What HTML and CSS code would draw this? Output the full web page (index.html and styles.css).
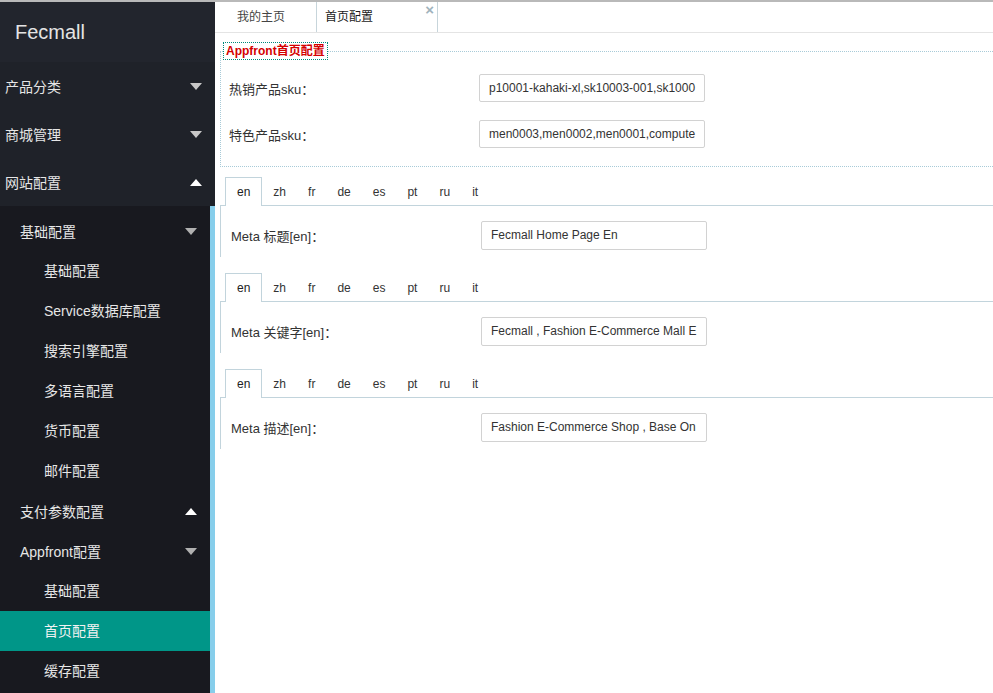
FILE: index.html
```html
<!DOCTYPE html>
<html lang="zh">
<head>
<meta charset="utf-8">
<title>Fecmall</title>
<link rel="stylesheet" href="styles.css">
</head>
<body>
<div class="page">
  <aside class="sidebar">
    <div class="logo">Fecmall</div>
    <ul class="nav">
      <li class="nav-item"><span>产品分类</span><i class="arrow down"></i></li>
      <li class="nav-item"><span>商城管理</span><i class="arrow down"></i></li>
      <li class="nav-item"><span>网站配置</span><i class="arrow up"></i></li>
    </ul>
    <div class="subwrap">
      <ul class="subnav">
        <li class="sub-head"><span>基础配置</span><i class="arrow down dim"></i></li>
        <li class="sub-item">基础配置</li>
        <li class="sub-item">Service数据库配置</li>
        <li class="sub-item">搜索引擎配置</li>
        <li class="sub-item">多语言配置</li>
        <li class="sub-item">货币配置</li>
        <li class="sub-item">邮件配置</li>
        <li class="sub-head"><span>支付参数配置</span><i class="arrow up"></i></li>
        <li class="sub-head"><span>Appfront配置</span><i class="arrow down dim"></i></li>
        <li class="sub-item">基础配置</li>
        <li class="sub-item active">首页配置</li>
        <li class="sub-item">缓存配置</li>
      </ul>
      <div class="scroll-track"></div>
    </div>
  </aside>
  <main class="main">
    <div class="tabbar">
      <div class="tab home">我的主页</div>
      <div class="tab current">首页配置<span class="close">×</span></div>
    </div>
    <div class="content">
      <fieldset class="box">
        <legend class="box-title">Appfront首页配置</legend>
        <div class="row">
          <label class="row-label">热销产品sku：</label>
          <div class="input">p10001-kahaki-xl,sk10003-001,sk1000</div>
        </div>
        <div class="row">
          <label class="row-label">特色产品sku：</label>
          <div class="input">men0003,men0002,men0001,compute</div>
        </div>
      </fieldset>

      <div class="lang-block">
        <ul class="lang-tabs">
          <li class="on">en</li><li>zh</li><li>fr</li><li>de</li><li>es</li><li>pt</li><li>ru</li><li>it</li>
        </ul>
        <div class="lang-panel">
          <div class="panel-row">
            <label class="panel-label">Meta 标题[en]：</label>
            <div class="input wide">Fecmall Home Page En</div>
          </div>
        </div>
      </div>

      <div class="lang-block">
        <ul class="lang-tabs">
          <li class="on">en</li><li>zh</li><li>fr</li><li>de</li><li>es</li><li>pt</li><li>ru</li><li>it</li>
        </ul>
        <div class="lang-panel">
          <div class="panel-row">
            <label class="panel-label">Meta 关键字[en]：</label>
            <div class="input wide">Fecmall , Fashion E-Commerce Mall E</div>
          </div>
        </div>
      </div>

      <div class="lang-block">
        <ul class="lang-tabs">
          <li class="on">en</li><li>zh</li><li>fr</li><li>de</li><li>es</li><li>pt</li><li>ru</li><li>it</li>
        </ul>
        <div class="lang-panel">
          <div class="panel-row">
            <label class="panel-label">Meta 描述[en]：</label>
            <div class="input wide">Fashion E-Commerce Shop , Base On</div>
          </div>
        </div>
      </div>
    </div>
  </main>
</div>
</body>
</html>
```

FILE: styles.css
```css
* { box-sizing: border-box; }
html, body { margin: 0; padding: 0; height: 100%; }
body {
  font-family: "Liberation Sans", Arial, "Noto Sans CJK SC", sans-serif;
  background: #fff;
  color: #333;
  overflow: hidden;
}
ul { list-style: none; margin: 0; padding: 0; }

.page {
  display: flex;
  height: 693px;
  border-top: 2px solid #b9b9b9;
}

/* Sidebar */
.sidebar {
  width: 215px;
  flex: 0 0 215px;
  background: #1f2229;
  display: flex;
  flex-direction: column;
}
.logo {
  height: 60px;
  line-height: 60px;
  padding-left: 15px;
  font-size: 20px;
  color: #e4e4e4;
  background: #22252d;
}
.nav-item {
  height: 48px;
  display: flex;
  align-items: center;
  justify-content: space-between;
  padding: 0 13px 0 5px;
  font-size: 14px;
  color: #e6e6e6;
}
.arrow {
  display: block;
  width: 0;
  height: 0;
  border-left: 6px solid transparent;
  border-right: 6px solid transparent;
}
.arrow.down { border-top: 7px solid #c8c8c8; }
.arrow.up { border-bottom: 7px solid #ffffff; }
.arrow.dim.down { border-top-color: #b0b0b0; }

.subwrap {
  flex: 1;
  display: flex;
  background: #18191f;
}
.subnav {
  flex: 1;
  padding-top: 5px;
}
.scroll-track {
  width: 5px;
  background: #87ceeb;
}
.sub-head {
  height: 40px;
  display: flex;
  align-items: center;
  justify-content: space-between;
  padding: 0 13px 0 20px;
  font-size: 14px;
  color: #e6e6e6;
}
.sub-item {
  height: 40px;
  line-height: 40px;
  padding-left: 44px;
  font-size: 14px;
  color: #e6e6e6;
}
.sub-item.active {
  background: #009688;
  color: #f2f2f2;
}

/* Main */
.main {
  flex: 1;
  overflow: hidden;
  background: #fff;
}
.tabbar {
  height: 31px;
  display: flex;
  border-bottom: 1px solid #e4e4e4;
}
.tab {
  position: relative;
  height: 30px;
  line-height: 30px;
  font-size: 12px;
  border-right: 1px solid #c7d5db;
  color: #444;
}
.tab.home {
  width: 102px;
  padding-left: 22px;
}
.tab.current {
  width: 121px;
  padding-left: 8px;
  color: #1a1a1a;
}
.close {
  position: absolute;
  right: 3px;
  top: -7px;
  font-size: 15px;
  font-weight: bold;
  color: #9fb3bd;
}

.content {
  padding-left: 5px;
  width: 800px;
}

.box {
  margin: 10px -30px 0 0;
  padding: 4px 0 18px 8px;
  border: 1px dotted #a8cbd8;
  border-right: none;
  min-width: 0;
}
.box-title {
  font-size: 12px;
  font-weight: bold;
  color: #d40000;
  padding: 0 2px;
  margin-left: -5px;
  line-height: 16px;
  outline: 1px dotted #00897b;
  outline-offset: 0;
}
.row {
  display: flex;
  align-items: center;
  margin-top: 11px;
  height: 28px;
}
.row + .row { margin-top: 18px; }
.row-label {
  width: 250px;
  font-size: 13px;
  color: #333;
}
.input {
  width: 226px;
  height: 28px;
  line-height: 26px;
  border: 1px solid #d2d2d2;
  border-radius: 2px;
  padding-left: 9px;
  font-size: 12px;
  color: #333;
  white-space: nowrap;
  overflow: hidden;
  background: #fff;
}
.input.wide { height: 29px; line-height: 27px; }

.lang-block {
  margin-top: 10px;
}
.lang-block + .lang-block { margin-top: 16px; }
.lang-tabs {
  display: flex;
  padding-left: 5px;
  height: 28px;
}
.lang-tabs li {
  height: 29px;
  line-height: 29px;
  padding: 0 10px;
  font-size: 12px;
  color: #333;
  border: 1px solid transparent;
  border-bottom: none;
}
.lang-tabs li.on {
  border-color: #c2d4dc;
  padding: 0 11px;
  background: #fff;
  color: #222;
  position: relative;
  z-index: 1;
}
.lang-panel {
  border-top: 1px solid #c2d4dc;
  border-left: 1px solid #c2d4dc;
  margin-right: -30px;
  height: 52px;
  padding-left: 10px;
  padding-top: 15px;
}
.panel-row {
  display: flex;
  align-items: center;
}
.panel-label {
  width: 250px;
  font-size: 13px;
  color: #333;
}
```
